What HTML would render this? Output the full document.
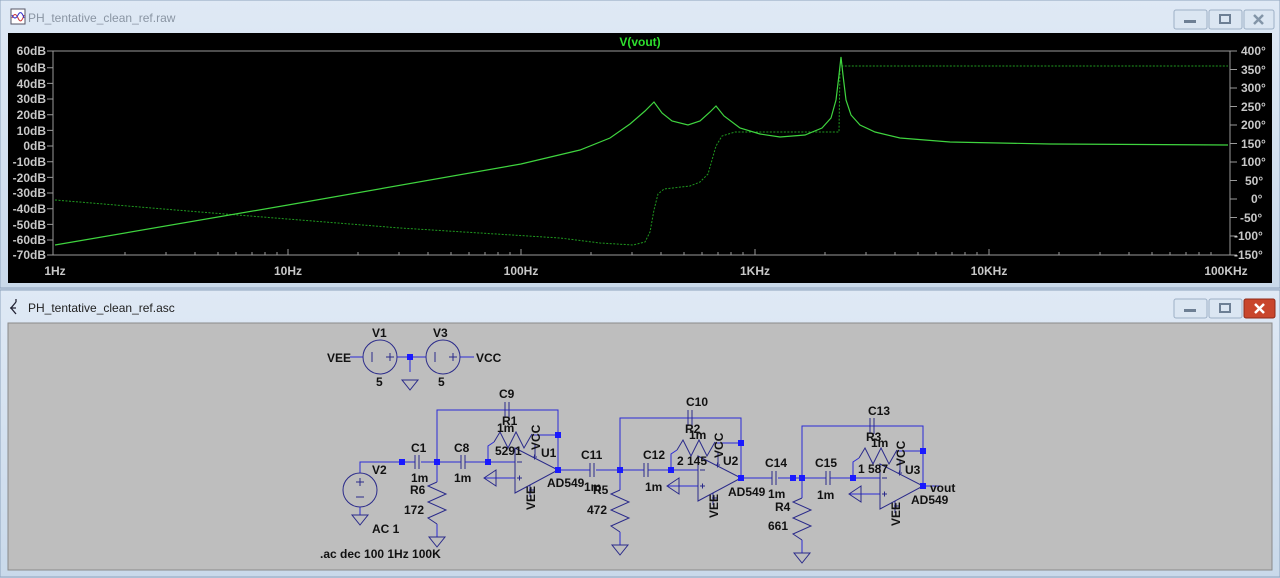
<!DOCTYPE html>
<html><head><meta charset="utf-8"><style>
html,body{margin:0;padding:0;width:1280px;height:578px;overflow:hidden;background:#c5d5e6;}
svg{display:block}
text{font-family:"Liberation Sans",sans-serif;}
</style></head><body>
<svg width="1280" height="578" viewBox="0 0 1280 578" xmlns="http://www.w3.org/2000/svg">
<defs>
<linearGradient id="tb" x1="0" y1="0" x2="0" y2="1"><stop offset="0" stop-color="#dfe9f5"/><stop offset="1" stop-color="#c9d9ea"/></linearGradient>
</defs>
<!-- top window -->
<rect x="0" y="0" width="1280" height="288" fill="url(#tb)"/>
<rect x="0" y="0" width="1280" height="288" fill="none" stroke="#8ea4bd"/>
<g transform="translate(11,9)"><rect x="0" y="0" width="14" height="15" fill="#fff" stroke="#556"/><path d="M1,9 Q4,2 7,9 T13,6" stroke="#c33" fill="none"/><path d="M1,6 Q4,12 7,6 T13,9" stroke="#33c" fill="none"/></g>
<text x="28" y="22" font-size="12" fill="#8a95a3">PH_tentative_clean_ref.raw</text>
<g><rect x="1174" y="10" width="33" height="19" rx="2" fill="#dbe6f2" stroke="#9db0c6"/><rect x="1184" y="20" width="12" height="3" fill="#6d7f94"/>
<rect x="1209" y="10" width="33" height="19" rx="2" fill="#dbe6f2" stroke="#9db0c6"/><rect x="1220" y="15" width="10" height="8" fill="none" stroke="#6d7f94" stroke-width="2"/>
<rect x="1244" y="10" width="30" height="19" rx="2" fill="#dbe6f2" stroke="#9db0c6"/><path d="M1254,15 l9,9 M1263,15 l-9,9" stroke="#8395a8" stroke-width="2.5"/></g>
<rect x="8" y="33" width="1264" height="250" fill="#000"/>
<text x="640" y="46" font-size="12" font-weight="bold" fill="#2ee02e" text-anchor="middle">V(vout)</text>
<g stroke="#9a9a9a" fill="none">
<rect x="53" y="51" width="1177" height="204"/>
<path d="M47,51h6M47,67.7h6M47,83.4h6M47,99h6M47,114.7h6M47,130.4h6M47,146h6M47,161.7h6M47,177.4h6M47,193h6M47,208.7h6M47,224.4h6M47,240h6M47,255h6"/>
<path d="M1230,51h7M1230,69.5h7M1230,88h7M1230,106.5h7M1230,125h7M1230,143.5h7M1230,162h7M1230,180.5h7M1230,199h7M1230,217.5h7M1230,236h7M1230,255h7"/>
<path d="M125,255v-3M166,255v-3M195,255v-3M218,255v-3M236,255v-3M252,255v-3M265,255v-3M277,255v-3M288,255v-6
M358,255v-3M399,255v-3M428,255v-3M451,255v-3M469,255v-3M485,255v-3M498,255v-3M510,255v-3M521,255v-6
M591,255v-3M632,255v-3M661,255v-3M684,255v-3M702,255v-3M718,255v-3M731,255v-3M743,255v-3M755,255v-6
M825,255v-3M866,255v-3M895,255v-3M918,255v-3M936,255v-3M952,255v-3M965,255v-3M977,255v-3M989,255v-6
M1059,255v-3M1100,255v-3M1129,255v-3M1152,255v-3M1170,255v-3M1186,255v-3M1199,255v-3M1211,255v-3"/>
</g>
<g font-size="12" font-weight="bold" fill="#c8c8c8" text-anchor="end">
<text x="46" y="55">60dB</text><text x="46" y="72">50dB</text><text x="46" y="88">40dB</text><text x="46" y="103">30dB</text><text x="46" y="119">20dB</text><text x="46" y="135">10dB</text><text x="46" y="150">0dB</text><text x="46" y="166">-10dB</text><text x="46" y="182">-20dB</text><text x="46" y="197">-30dB</text><text x="46" y="213">-40dB</text><text x="46" y="229">-50dB</text><text x="46" y="244">-60dB</text><text x="46" y="259">-70dB</text>
</g>
<g font-size="12" font-weight="bold" fill="#c8c8c8">
<text x="1241" y="55">400°</text><text x="1241" y="74">350°</text><text x="1241" y="92">300°</text><text x="1241" y="111">250°</text><text x="1241" y="129">200°</text><text x="1241" y="148">150°</text><text x="1241" y="166">100°</text><text x="1245" y="185">50°</text><text x="1251" y="203">0°</text><text x="1240" y="222">-50°</text><text x="1234" y="240">-100°</text><text x="1234" y="259">-150°</text>
</g>
<g font-size="12" font-weight="bold" fill="#c8c8c8" text-anchor="middle">
<text x="55" y="275">1Hz</text><text x="288" y="275">10Hz</text><text x="521" y="275">100Hz</text><text x="755" y="275">1KHz</text><text x="989" y="275">10KHz</text><text x="1226" y="275">100KHz</text>
</g>
<polyline fill="none" stroke="#1f9a1f" stroke-width="1" stroke-dasharray="2,1.5" points="55,200 200,212 400,228 560,238 600,243 633,245 645,242 650,232 654,210 658,194 664,189 690,186 700,182 708,174 712,160 716,146 722,136 735,132 839,132 840,66 1228,66"/>
<polyline fill="none" stroke="#3fd43f" stroke-width="1.2" points="55,245 288,205 521,164 580,150 610,138 630,124 645,111 654,102 662,113 672,121 688,125 700,121 710,112 716,106 724,116 740,128 760,134 780,137 805,135 822,128 831,118 836,100 839,75 841,57 843,75 846,100 851,115 860,125 875,132 900,138 950,142 1050,144 1228,145"/>

<!-- bottom window -->
<rect x="0" y="290" width="1280" height="288" fill="url(#tb)"/>
<rect x="0" y="290" width="1280" height="287" fill="none" stroke="#8ea4bd"/>
<path d="M10,308 h6 M16,302 l-5,6 l5,6 M16,302v-3" stroke="#223" fill="none" stroke-width="1.3"/>
<text x="28" y="312" font-size="12" fill="#222">PH_tentative_clean_ref.asc</text>
<rect x="1174" y="299" width="33" height="19" rx="2" fill="#dbe6f2" stroke="#9db0c6"/><rect x="1184" y="309" width="12" height="3" fill="#6d7f94"/>
<rect x="1209" y="299" width="33" height="19" rx="2" fill="#dbe6f2" stroke="#9db0c6"/><rect x="1220" y="304" width="10" height="8" fill="none" stroke="#6d7f94" stroke-width="2"/>
<rect x="1244" y="299" width="31" height="19" rx="2" fill="#c9462c" stroke="#8e2a18"/><path d="M1255,304 l9,9 M1264,304 l-9,9" stroke="#fff" stroke-width="2.5"/>
<rect x="8" y="323" width="1264" height="247" fill="#bebebe" stroke="#8a8a8a"/>

<g stroke="#2b2bd6" fill="none" stroke-width="1">
<!-- supplies -->
<path d="M350,357H363M397,357H426M460,357H474M410,357V372"/>
<!-- input -->
<path d="M360,473V462H415M421,462H437"/>
<path d="M360,507V515"/>
</g>
<g stroke="#2a2a8a" fill="none" stroke-width="1">
<circle cx="380" cy="357" r="17"/><circle cx="443" cy="357" r="17"/>
<path d="M372,352v10M386,357h8M390,353v8M435,352v10M449,357h8M453,353v8"/>
<path d="M402,380h16l-8,10z"/>
<circle cx="360" cy="490" r="17"/>
<path d="M360,478v8M356,482h8M356,497h8"/>
<path d="M352,515h16l-8,10z"/>
<path d="M415,455v14M419,455v14"/>
</g>
<g fill="#1a1aff"><rect x="407" y="354" width="6" height="6"/><rect x="399" y="459" width="6" height="6"/></g>

<!-- stage template -->
<g id="st1" transform="translate(437,462)">
<g stroke="#2b2bd6" fill="none">
<path d="M0,0H24M28,0H78M0,0V-52H121V8M121,-27H95M51,0V-16L57,-20M0,0V20M0,62V75M47,16H78M121,8H130"/>
</g>
<g stroke="#2a2a8a" fill="none">
<path d="M24,-7v14M28,-7v14"/>
<path d="M68,-60v16M72,-60v16"/>
<path d="M57,-20l6,-10l8,16l8,-16l8,16l8,-14"/>
<path d="M0,20l-9,4l18,8l-18,8l18,8l-18,8l9,6"/>
<path d="M-8,75h16l-8,10z"/>
<path d="M78,-14V31L121,8Z"/>
<path d="M47,16l12,-8v16z"/>
<path d="M98,-18V-6M93,23V35"/>
<path d="M80,0h5M80,16h5M82.5,13.5v5M95,-5h5M97.5,-7.5v5M92,28h5"/>
</g>
<g fill="#1a1aff"><rect x="-3" y="-3" width="6" height="6"/><rect x="48" y="-3" width="6" height="6"/><rect x="118" y="5" width="6" height="6"/><rect x="118" y="-30" width="6" height="6"/></g>
</g>
<use href="#st1" transform="translate(183,8)"/>
<use href="#st1" transform="translate(365,16)"/>
<g stroke="#2b2bd6" fill="none"><path d="M567,470H590M596,470H620M750,478H772M778,478H802M932,486H940"/></g>
<g stroke="#2a2a8a"><path d="M590,463v14M594,463v14M772,471v14M776,471v14"/></g>
<g fill="#1a1aff"><rect x="790" y="475" width="6" height="6"/></g>

<g font-size="12" font-weight="bold" fill="#111">
<text x="327" y="362">VEE</text><text x="476" y="362">VCC</text>
<text x="372" y="337">V1</text><text x="433" y="337">V3</text>
<text x="376" y="386">5</text><text x="438" y="386">5</text>
<text x="372" y="474">V2</text><text x="372" y="533">AC 1</text>
<text x="320" y="558">.ac dec 100 1Hz 100K</text>
<text x="411" y="452">C1</text><text x="411" y="482">1m</text>
<text x="410" y="494">R6</text><text x="404" y="514">172</text>
<text x="454" y="452">C8</text><text x="454" y="482">1m</text>
<text x="499" y="398">C9</text><text x="502" y="425">R1</text><text x="497" y="432">1m</text>
<text x="495" y="455">5291</text><text x="541" y="457">U1</text><text x="547" y="487">AD549</text>
<text x="581" y="459">C11</text><text x="584" y="491">1m</text><text x="593" y="494">R5</text><text x="587" y="514">472</text>
<text x="643" y="459">C12</text><text x="645" y="491">1m</text>
<text x="686" y="406">C10</text><text x="685" y="433">R2</text><text x="689" y="439">1m</text>
<text x="677" y="465">2 145</text><text x="723" y="465">U2</text><text x="728" y="496">AD549</text>
<text x="765" y="467">C14</text><text x="768" y="498">1m</text><text x="775" y="511">R4</text><text x="768" y="530">661</text>
<text x="815" y="467">C15</text><text x="817" y="499">1m</text>
<text x="868" y="415">C13</text><text x="866" y="441">R3</text><text x="871" y="447">1m</text>
<text x="858" y="473">1 587</text><text x="905" y="474">U3</text><text x="930" y="492">vout</text><text x="911" y="504">AD549</text>
</g>
<g font-size="12" font-weight="bold" fill="#111">
<text transform="translate(540,450) rotate(-90)">VCC</text><text transform="translate(535,510) rotate(-90)">VEE</text>
<text transform="translate(723,458) rotate(-90)">VCC</text><text transform="translate(718,518) rotate(-90)">VEE</text>
<text transform="translate(905,466) rotate(-90)">VCC</text><text transform="translate(900,526) rotate(-90)">VEE</text>
</g>
</svg>
</body></html>
